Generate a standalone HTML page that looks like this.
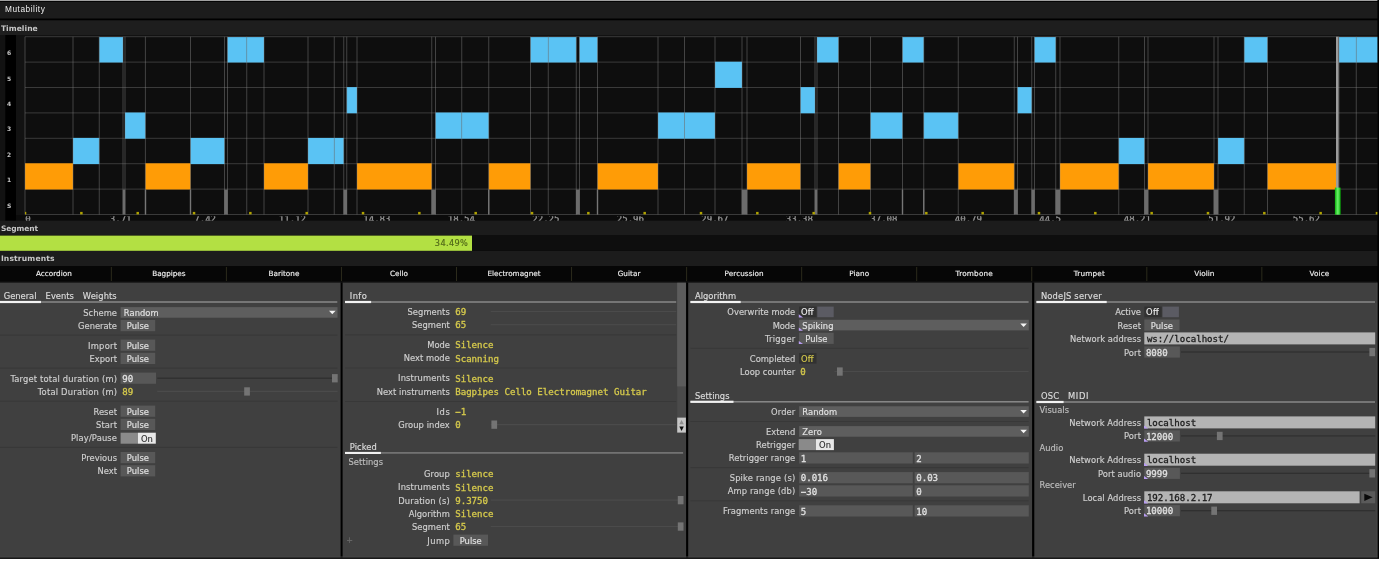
<!DOCTYPE html>
<html lang="en">
<head>
<meta charset="utf-8">
<title>Mutability</title>
<style>
html,body{margin:0;padding:0;background:#fff;width:1384px;height:562px;overflow:hidden}
svg text{white-space:pre}
</style>
</head>
<body>
<svg width="1384" height="562" viewBox="0 0 1384 562" style="position:absolute;left:0;top:0;display:block;filter:blur(0.4px)">
<rect x="0.00" y="0.00" width="1384.00" height="562.00" fill="#ffffff" />
<rect x="0.00" y="0.00" width="1379.00" height="558.90" fill="#000000" />
<rect x="0.00" y="0.00" width="1377.40" height="0.90" fill="#b4b4b4" />
<rect x="0.00" y="1.80" width="1377.40" height="16.70" fill="#1c1c1c" />
<text x="5.00" y="12.30" fill="#ececec" font-size="8.3" font-family="'Liberation Sans', sans-serif" text-anchor="start" font-weight="normal" textLength="39.8" lengthAdjust="spacing">Mutability</text>
<rect x="0.00" y="20.30" width="1377.40" height="14.70" fill="#1e1e1e" />
<text x="0.90" y="30.60" fill="#c8c8c8" font-size="7.6" font-family="'DejaVu Sans', 'Liberation Sans', sans-serif" text-anchor="start" font-weight="bold"  textLength="36.83" lengthAdjust="spacing">Timeline</text>
<rect x="0.00" y="35.00" width="1377.40" height="186.00" fill="#121212" />
<rect x="5.30" y="35.00" width="10.70" height="186.00" fill="#000000" />
<rect x="25.00" y="36.70" width="1352.40" height="177.80" fill="#0e0e0e" />
<rect x="16.00" y="215.00" width="1361.40" height="5.70" fill="#0b0b0b" />
<rect x="25.00" y="36.20" width="1352.40" height="1.00" fill="#3a3a3a" />
<rect x="25.00" y="61.60" width="1352.40" height="1.00" fill="#3a3a3a" />
<rect x="25.00" y="87.00" width="1352.40" height="1.00" fill="#3a3a3a" />
<rect x="25.00" y="112.40" width="1352.40" height="1.00" fill="#3a3a3a" />
<rect x="25.00" y="137.80" width="1352.40" height="1.00" fill="#3a3a3a" />
<rect x="25.00" y="163.20" width="1352.40" height="1.00" fill="#3a3a3a" />
<rect x="25.00" y="188.60" width="1352.40" height="1.00" fill="#3a3a3a" />
<rect x="25.00" y="214.00" width="1352.40" height="1.00" fill="#3a3a3a" />
<rect x="25.00" y="163.30" width="48.00" height="26.20" fill="#ff9c06" />
<rect x="73.00" y="137.90" width="26.25" height="26.20" fill="#5ac3f4" />
<rect x="99.25" y="37.10" width="23.75" height="25.40" fill="#5ac3f4" />
<rect x="125.00" y="112.50" width="20.40" height="26.20" fill="#5ac3f4" />
<rect x="145.40" y="163.30" width="45.10" height="26.20" fill="#ff9c06" />
<rect x="190.50" y="137.90" width="34.00" height="26.20" fill="#5ac3f4" />
<rect x="227.50" y="37.10" width="19.25" height="25.40" fill="#5ac3f4" />
<rect x="246.75" y="37.10" width="17.25" height="25.40" fill="#5ac3f4" />
<rect x="264.00" y="163.30" width="44.00" height="26.20" fill="#ff9c06" />
<rect x="308.00" y="137.90" width="26.25" height="26.20" fill="#5ac3f4" />
<rect x="334.25" y="137.90" width="9.50" height="26.20" fill="#5ac3f4" />
<rect x="346.75" y="87.10" width="10.25" height="26.20" fill="#5ac3f4" />
<rect x="357.00" y="163.30" width="74.75" height="26.20" fill="#ff9c06" />
<rect x="435.50" y="112.50" width="26.25" height="26.20" fill="#5ac3f4" />
<rect x="461.75" y="112.50" width="27.00" height="26.20" fill="#5ac3f4" />
<rect x="488.75" y="163.30" width="41.75" height="26.20" fill="#ff9c06" />
<rect x="530.50" y="37.10" width="17.75" height="25.40" fill="#5ac3f4" />
<rect x="548.25" y="37.10" width="28.00" height="25.40" fill="#5ac3f4" />
<rect x="579.50" y="37.10" width="18.00" height="25.40" fill="#5ac3f4" />
<rect x="597.50" y="163.30" width="60.50" height="26.20" fill="#ff9c06" />
<rect x="658.00" y="112.50" width="26.50" height="26.20" fill="#5ac3f4" />
<rect x="684.50" y="112.50" width="30.50" height="26.20" fill="#5ac3f4" />
<rect x="715.00" y="61.70" width="27.00" height="26.20" fill="#5ac3f4" />
<rect x="747.00" y="163.30" width="53.50" height="26.20" fill="#ff9c06" />
<rect x="800.50" y="87.10" width="14.50" height="26.20" fill="#5ac3f4" />
<rect x="817.00" y="37.10" width="21.50" height="25.40" fill="#5ac3f4" />
<rect x="838.50" y="163.30" width="32.00" height="26.20" fill="#ff9c06" />
<rect x="870.50" y="112.50" width="32.00" height="26.20" fill="#5ac3f4" />
<rect x="902.50" y="37.10" width="21.25" height="25.40" fill="#5ac3f4" />
<rect x="923.75" y="112.50" width="34.50" height="26.20" fill="#5ac3f4" />
<rect x="958.25" y="163.30" width="56.00" height="26.20" fill="#ff9c06" />
<rect x="1017.50" y="87.10" width="14.25" height="26.20" fill="#5ac3f4" />
<rect x="1034.50" y="37.10" width="21.25" height="25.40" fill="#5ac3f4" />
<rect x="1060.00" y="163.30" width="58.75" height="26.20" fill="#ff9c06" />
<rect x="1118.75" y="137.90" width="25.75" height="26.20" fill="#5ac3f4" />
<rect x="1148.00" y="163.30" width="66.00" height="26.20" fill="#ff9c06" />
<rect x="1218.00" y="137.90" width="26.25" height="26.20" fill="#5ac3f4" />
<rect x="1244.25" y="37.10" width="23.25" height="25.40" fill="#5ac3f4" />
<rect x="1267.50" y="163.30" width="68.70" height="26.20" fill="#ff9c06" />
<rect x="1339.00" y="37.10" width="17.25" height="25.40" fill="#5ac3f4" />
<rect x="1356.25" y="37.10" width="21.15" height="25.40" fill="#5ac3f4" />
<rect x="24.50" y="36.70" width="1.00" height="177.80" fill="#8c8c8c" opacity="0.42"/>
<rect x="72.50" y="36.70" width="1.00" height="177.80" fill="#8c8c8c" opacity="0.42"/>
<rect x="98.75" y="36.70" width="1.00" height="177.80" fill="#8c8c8c" opacity="0.42"/>
<rect x="122.50" y="36.70" width="1.00" height="177.80" fill="#8c8c8c" opacity="0.42"/>
<rect x="124.50" y="36.70" width="1.00" height="177.80" fill="#8c8c8c" opacity="0.42"/>
<rect x="144.90" y="36.70" width="1.00" height="177.80" fill="#8c8c8c" opacity="0.42"/>
<rect x="190.00" y="36.70" width="1.00" height="177.80" fill="#8c8c8c" opacity="0.42"/>
<rect x="224.00" y="36.70" width="1.00" height="177.80" fill="#8c8c8c" opacity="0.42"/>
<rect x="227.00" y="36.70" width="1.00" height="177.80" fill="#8c8c8c" opacity="0.42"/>
<rect x="246.25" y="36.70" width="1.00" height="177.80" fill="#8c8c8c" opacity="0.42"/>
<rect x="263.50" y="36.70" width="1.00" height="177.80" fill="#8c8c8c" opacity="0.42"/>
<rect x="307.50" y="36.70" width="1.00" height="177.80" fill="#8c8c8c" opacity="0.42"/>
<rect x="333.75" y="36.70" width="1.00" height="177.80" fill="#8c8c8c" opacity="0.42"/>
<rect x="343.25" y="36.70" width="1.00" height="177.80" fill="#8c8c8c" opacity="0.42"/>
<rect x="346.25" y="36.70" width="1.00" height="177.80" fill="#8c8c8c" opacity="0.42"/>
<rect x="356.50" y="36.70" width="1.00" height="177.80" fill="#8c8c8c" opacity="0.42"/>
<rect x="431.25" y="36.70" width="1.00" height="177.80" fill="#8c8c8c" opacity="0.42"/>
<rect x="435.00" y="36.70" width="1.00" height="177.80" fill="#8c8c8c" opacity="0.42"/>
<rect x="461.25" y="36.70" width="1.00" height="177.80" fill="#8c8c8c" opacity="0.42"/>
<rect x="488.25" y="36.70" width="1.00" height="177.80" fill="#8c8c8c" opacity="0.42"/>
<rect x="530.00" y="36.70" width="1.00" height="177.80" fill="#8c8c8c" opacity="0.42"/>
<rect x="547.75" y="36.70" width="1.00" height="177.80" fill="#8c8c8c" opacity="0.42"/>
<rect x="575.75" y="36.70" width="1.00" height="177.80" fill="#8c8c8c" opacity="0.42"/>
<rect x="579.00" y="36.70" width="1.00" height="177.80" fill="#8c8c8c" opacity="0.42"/>
<rect x="597.00" y="36.70" width="1.00" height="177.80" fill="#8c8c8c" opacity="0.42"/>
<rect x="657.50" y="36.70" width="1.00" height="177.80" fill="#8c8c8c" opacity="0.42"/>
<rect x="684.00" y="36.70" width="1.00" height="177.80" fill="#8c8c8c" opacity="0.42"/>
<rect x="714.50" y="36.70" width="1.00" height="177.80" fill="#8c8c8c" opacity="0.42"/>
<rect x="741.50" y="36.70" width="1.00" height="177.80" fill="#8c8c8c" opacity="0.42"/>
<rect x="746.50" y="36.70" width="1.00" height="177.80" fill="#8c8c8c" opacity="0.42"/>
<rect x="800.00" y="36.70" width="1.00" height="177.80" fill="#8c8c8c" opacity="0.42"/>
<rect x="814.50" y="36.70" width="1.00" height="177.80" fill="#8c8c8c" opacity="0.42"/>
<rect x="816.50" y="36.70" width="1.00" height="177.80" fill="#8c8c8c" opacity="0.42"/>
<rect x="838.00" y="36.70" width="1.00" height="177.80" fill="#8c8c8c" opacity="0.42"/>
<rect x="870.00" y="36.70" width="1.00" height="177.80" fill="#8c8c8c" opacity="0.42"/>
<rect x="902.00" y="36.70" width="1.00" height="177.80" fill="#8c8c8c" opacity="0.42"/>
<rect x="923.25" y="36.70" width="1.00" height="177.80" fill="#8c8c8c" opacity="0.42"/>
<rect x="957.75" y="36.70" width="1.00" height="177.80" fill="#8c8c8c" opacity="0.42"/>
<rect x="1013.75" y="36.70" width="1.00" height="177.80" fill="#8c8c8c" opacity="0.42"/>
<rect x="1017.00" y="36.70" width="1.00" height="177.80" fill="#8c8c8c" opacity="0.42"/>
<rect x="1031.25" y="36.70" width="1.00" height="177.80" fill="#8c8c8c" opacity="0.42"/>
<rect x="1034.00" y="36.70" width="1.00" height="177.80" fill="#8c8c8c" opacity="0.42"/>
<rect x="1055.25" y="36.70" width="1.00" height="177.80" fill="#8c8c8c" opacity="0.42"/>
<rect x="1059.50" y="36.70" width="1.00" height="177.80" fill="#8c8c8c" opacity="0.42"/>
<rect x="1118.25" y="36.70" width="1.00" height="177.80" fill="#8c8c8c" opacity="0.42"/>
<rect x="1144.00" y="36.70" width="1.00" height="177.80" fill="#8c8c8c" opacity="0.42"/>
<rect x="1147.50" y="36.70" width="1.00" height="177.80" fill="#8c8c8c" opacity="0.42"/>
<rect x="1213.50" y="36.70" width="1.00" height="177.80" fill="#8c8c8c" opacity="0.42"/>
<rect x="1217.50" y="36.70" width="1.00" height="177.80" fill="#8c8c8c" opacity="0.42"/>
<rect x="1243.75" y="36.70" width="1.00" height="177.80" fill="#8c8c8c" opacity="0.42"/>
<rect x="1267.00" y="36.70" width="1.00" height="177.80" fill="#8c8c8c" opacity="0.42"/>
<rect x="1338.50" y="36.70" width="1.00" height="177.80" fill="#8c8c8c" opacity="0.42"/>
<rect x="1355.75" y="36.70" width="1.00" height="177.80" fill="#8c8c8c" opacity="0.42"/>
<rect x="122.70" y="189.60" width="2.60" height="24.90" fill="#6c6c6c" />
<rect x="224.20" y="189.60" width="3.60" height="24.90" fill="#6c6c6c" />
<rect x="343.45" y="189.60" width="3.60" height="24.90" fill="#6c6c6c" />
<rect x="431.45" y="189.60" width="4.35" height="24.90" fill="#6c6c6c" />
<rect x="575.95" y="189.60" width="3.85" height="24.90" fill="#6c6c6c" />
<rect x="741.70" y="189.60" width="5.60" height="24.90" fill="#6c6c6c" />
<rect x="814.70" y="189.60" width="2.60" height="24.90" fill="#6c6c6c" />
<rect x="1013.95" y="189.60" width="3.85" height="24.90" fill="#6c6c6c" />
<rect x="1031.45" y="189.60" width="3.35" height="24.90" fill="#6c6c6c" />
<rect x="1055.45" y="189.60" width="4.85" height="24.90" fill="#6c6c6c" />
<rect x="1144.20" y="189.60" width="4.10" height="24.90" fill="#6c6c6c" />
<rect x="1213.70" y="189.60" width="4.60" height="24.90" fill="#6c6c6c" />
<rect x="144.80" y="189.60" width="1.40" height="24.90" fill="#767676" />
<rect x="189.80" y="189.60" width="1.40" height="24.90" fill="#767676" />
<rect x="488.05" y="189.60" width="1.40" height="24.90" fill="#767676" />
<rect x="596.80" y="189.60" width="1.40" height="24.90" fill="#767676" />
<rect x="901.80" y="189.60" width="1.40" height="24.90" fill="#767676" />
<rect x="923.05" y="189.60" width="1.40" height="24.90" fill="#767676" />
<rect x="1336.00" y="36.70" width="2.60" height="152.90" fill="#9c9c9c" />
<defs><linearGradient id="gg" x1="0" x2="1" y1="0" y2="0"><stop offset="0" stop-color="#08b408"/><stop offset="0.5" stop-color="#6cf06c"/><stop offset="1" stop-color="#08b408"/></linearGradient></defs>
<rect x="1334.90" y="187.60" width="5.70" height="27.10" fill="url(#gg)" />
<rect x="25.00" y="211.90" width="1.30" height="2.50" fill="#b0a300" />
<rect x="80.13" y="211.90" width="2.50" height="2.50" fill="#b0a300" />
<rect x="136.46" y="211.90" width="2.50" height="2.50" fill="#b0a300" />
<rect x="192.79" y="211.90" width="2.50" height="2.50" fill="#b0a300" />
<rect x="249.12" y="211.90" width="2.50" height="2.50" fill="#b0a300" />
<rect x="305.45" y="211.90" width="2.50" height="2.50" fill="#b0a300" />
<rect x="361.78" y="211.90" width="2.50" height="2.50" fill="#b0a300" />
<rect x="418.11" y="211.90" width="2.50" height="2.50" fill="#b0a300" />
<rect x="474.44" y="211.90" width="2.50" height="2.50" fill="#b0a300" />
<rect x="530.77" y="211.90" width="2.50" height="2.50" fill="#b0a300" />
<rect x="587.10" y="211.90" width="2.50" height="2.50" fill="#b0a300" />
<rect x="643.43" y="211.90" width="2.50" height="2.50" fill="#b0a300" />
<rect x="699.76" y="211.90" width="2.50" height="2.50" fill="#b0a300" />
<rect x="756.09" y="211.90" width="2.50" height="2.50" fill="#b0a300" />
<rect x="812.42" y="211.90" width="2.50" height="2.50" fill="#b0a300" />
<rect x="868.75" y="211.90" width="2.50" height="2.50" fill="#b0a300" />
<rect x="925.08" y="211.90" width="2.50" height="2.50" fill="#b0a300" />
<rect x="981.41" y="211.90" width="2.50" height="2.50" fill="#b0a300" />
<rect x="1037.74" y="211.90" width="2.50" height="2.50" fill="#b0a300" />
<rect x="1094.07" y="211.90" width="2.50" height="2.50" fill="#b0a300" />
<rect x="1150.40" y="211.90" width="2.50" height="2.50" fill="#b0a300" />
<rect x="1206.73" y="211.90" width="2.50" height="2.50" fill="#b0a300" />
<rect x="1263.06" y="211.90" width="2.50" height="2.50" fill="#b0a300" />
<rect x="1319.39" y="211.90" width="2.50" height="2.50" fill="#b0a300" />
<rect x="1375.72" y="211.90" width="1.68" height="2.50" fill="#b0a300" />
<text x="7.00" y="55.20" fill="#c4c4c4" font-size="6.0" font-family="'DejaVu Sans', 'Liberation Sans', sans-serif" text-anchor="start" font-weight="bold" >6</text>
<text x="7.00" y="80.60" fill="#c4c4c4" font-size="6.0" font-family="'DejaVu Sans', 'Liberation Sans', sans-serif" text-anchor="start" font-weight="bold" >5</text>
<text x="7.00" y="106.00" fill="#c4c4c4" font-size="6.0" font-family="'DejaVu Sans', 'Liberation Sans', sans-serif" text-anchor="start" font-weight="bold" >4</text>
<text x="7.00" y="131.40" fill="#c4c4c4" font-size="6.0" font-family="'DejaVu Sans', 'Liberation Sans', sans-serif" text-anchor="start" font-weight="bold" >3</text>
<text x="7.00" y="156.80" fill="#c4c4c4" font-size="6.0" font-family="'DejaVu Sans', 'Liberation Sans', sans-serif" text-anchor="start" font-weight="bold" >2</text>
<text x="7.00" y="182.20" fill="#c4c4c4" font-size="6.0" font-family="'DejaVu Sans', 'Liberation Sans', sans-serif" text-anchor="start" font-weight="bold" >1</text>
<text x="7.00" y="207.60" fill="#c4c4c4" font-size="6.0" font-family="'DejaVu Sans', 'Liberation Sans', sans-serif" text-anchor="start" font-weight="bold" >S</text>
<clipPath id="axc"><rect x="0" y="216.3" width="1378" height="10"/></clipPath><g clip-path="url(#axc)">
<text x="25.20" y="222.00" fill="#969696" font-size="9.1" font-family="'DejaVu Sans Mono', 'Liberation Mono', monospace" text-anchor="start" font-weight="normal"  stroke="#969696" stroke-width="0.3">0</text>
<text x="109.70" y="222.00" fill="#969696" font-size="9.1" font-family="'DejaVu Sans Mono', 'Liberation Mono', monospace" text-anchor="start" font-weight="normal"  stroke="#969696" stroke-width="0.3">3.71</text>
<text x="194.20" y="222.00" fill="#969696" font-size="9.1" font-family="'DejaVu Sans Mono', 'Liberation Mono', monospace" text-anchor="start" font-weight="normal"  stroke="#969696" stroke-width="0.3">7.42</text>
<text x="278.70" y="222.00" fill="#969696" font-size="9.1" font-family="'DejaVu Sans Mono', 'Liberation Mono', monospace" text-anchor="start" font-weight="normal"  stroke="#969696" stroke-width="0.3">11.12</text>
<text x="363.20" y="222.00" fill="#969696" font-size="9.1" font-family="'DejaVu Sans Mono', 'Liberation Mono', monospace" text-anchor="start" font-weight="normal"  stroke="#969696" stroke-width="0.3">14.83</text>
<text x="447.70" y="222.00" fill="#969696" font-size="9.1" font-family="'DejaVu Sans Mono', 'Liberation Mono', monospace" text-anchor="start" font-weight="normal"  stroke="#969696" stroke-width="0.3">18.54</text>
<text x="532.20" y="222.00" fill="#969696" font-size="9.1" font-family="'DejaVu Sans Mono', 'Liberation Mono', monospace" text-anchor="start" font-weight="normal"  stroke="#969696" stroke-width="0.3">22.25</text>
<text x="616.70" y="222.00" fill="#969696" font-size="9.1" font-family="'DejaVu Sans Mono', 'Liberation Mono', monospace" text-anchor="start" font-weight="normal"  stroke="#969696" stroke-width="0.3">25.96</text>
<text x="701.20" y="222.00" fill="#969696" font-size="9.1" font-family="'DejaVu Sans Mono', 'Liberation Mono', monospace" text-anchor="start" font-weight="normal"  stroke="#969696" stroke-width="0.3">29.67</text>
<text x="785.70" y="222.00" fill="#969696" font-size="9.1" font-family="'DejaVu Sans Mono', 'Liberation Mono', monospace" text-anchor="start" font-weight="normal"  stroke="#969696" stroke-width="0.3">33.38</text>
<text x="870.20" y="222.00" fill="#969696" font-size="9.1" font-family="'DejaVu Sans Mono', 'Liberation Mono', monospace" text-anchor="start" font-weight="normal"  stroke="#969696" stroke-width="0.3">37.08</text>
<text x="954.70" y="222.00" fill="#969696" font-size="9.1" font-family="'DejaVu Sans Mono', 'Liberation Mono', monospace" text-anchor="start" font-weight="normal"  stroke="#969696" stroke-width="0.3">40.79</text>
<text x="1039.20" y="222.00" fill="#969696" font-size="9.1" font-family="'DejaVu Sans Mono', 'Liberation Mono', monospace" text-anchor="start" font-weight="normal"  stroke="#969696" stroke-width="0.3">44.5</text>
<text x="1123.70" y="222.00" fill="#969696" font-size="9.1" font-family="'DejaVu Sans Mono', 'Liberation Mono', monospace" text-anchor="start" font-weight="normal"  stroke="#969696" stroke-width="0.3">48.21</text>
<text x="1208.20" y="222.00" fill="#969696" font-size="9.1" font-family="'DejaVu Sans Mono', 'Liberation Mono', monospace" text-anchor="start" font-weight="normal"  stroke="#969696" stroke-width="0.3">51.92</text>
<text x="1292.70" y="222.00" fill="#969696" font-size="9.1" font-family="'DejaVu Sans Mono', 'Liberation Mono', monospace" text-anchor="start" font-weight="normal"  stroke="#969696" stroke-width="0.3">55.62</text>
</g>
<rect x="0.00" y="220.70" width="1377.40" height="14.90" fill="#1c1c1c" />
<text x="0.90" y="231.00" fill="#c8c8c8" font-size="7.5" font-family="'DejaVu Sans', 'Liberation Sans', sans-serif" text-anchor="start" font-weight="bold"  textLength="37.20" lengthAdjust="spacing">Segment</text>
<rect x="0.00" y="235.60" width="1377.40" height="15.30" fill="#0e0e0e" />
<rect x="0.00" y="235.60" width="472.00" height="15.30" fill="#b3e043" />
<text x="467.80" y="246.30" fill="#4f6618" font-size="8.2" font-family="'DejaVu Sans', 'Liberation Sans', sans-serif" text-anchor="end" font-weight="normal"  textLength="32.94" lengthAdjust="spacing" stroke="#4f6618" stroke-width="0.15">34.49%</text>
<rect x="0.00" y="250.90" width="1377.40" height="15.40" fill="#1c1c1c" />
<text x="0.90" y="261.40" fill="#c8c8c8" font-size="7.6" font-family="'DejaVu Sans', 'Liberation Sans', sans-serif" text-anchor="start" font-weight="bold"  textLength="53.64" lengthAdjust="spacing">Instruments</text>
<rect x="0.00" y="266.30" width="1377.40" height="15.10" fill="#060606" />
<text x="53.82" y="276.30" fill="#f0f0f0" font-size="7.26" font-family="'DejaVu Sans', 'Liberation Sans', sans-serif" text-anchor="middle" font-weight="normal"  textLength="35.85" lengthAdjust="spacing" stroke="#f0f0f0" stroke-width="0.15">Accordion</text>
<text x="168.88" y="276.30" fill="#f0f0f0" font-size="7.26" font-family="'DejaVu Sans', 'Liberation Sans', sans-serif" text-anchor="middle" font-weight="normal"  textLength="33.29" lengthAdjust="spacing" stroke="#f0f0f0" stroke-width="0.15">Bagpipes</text>
<rect x="110.85" y="267.00" width="1.00" height="14.00" fill="#2c2b1c" />
<text x="283.93" y="276.30" fill="#f0f0f0" font-size="7.26" font-family="'DejaVu Sans', 'Liberation Sans', sans-serif" text-anchor="middle" font-weight="normal"  textLength="30.88" lengthAdjust="spacing" stroke="#f0f0f0" stroke-width="0.15">Baritone</text>
<rect x="225.90" y="267.00" width="1.00" height="14.00" fill="#2c2b1c" />
<text x="398.97" y="276.30" fill="#f0f0f0" font-size="7.26" font-family="'DejaVu Sans', 'Liberation Sans', sans-serif" text-anchor="middle" font-weight="normal"  textLength="17.93" lengthAdjust="spacing" stroke="#f0f0f0" stroke-width="0.15">Cello</text>
<rect x="340.95" y="267.00" width="1.00" height="14.00" fill="#2c2b1c" />
<text x="514.02" y="276.30" fill="#f0f0f0" font-size="7.26" font-family="'DejaVu Sans', 'Liberation Sans', sans-serif" text-anchor="middle" font-weight="normal"  textLength="53.23" lengthAdjust="spacing" stroke="#f0f0f0" stroke-width="0.15">Electromagnet</text>
<rect x="456.00" y="267.00" width="1.00" height="14.00" fill="#2c2b1c" />
<text x="629.07" y="276.30" fill="#f0f0f0" font-size="7.26" font-family="'DejaVu Sans', 'Liberation Sans', sans-serif" text-anchor="middle" font-weight="normal"  textLength="22.72" lengthAdjust="spacing" stroke="#f0f0f0" stroke-width="0.15">Guitar</text>
<rect x="571.05" y="267.00" width="1.00" height="14.00" fill="#2c2b1c" />
<text x="744.12" y="276.30" fill="#f0f0f0" font-size="7.26" font-family="'DejaVu Sans', 'Liberation Sans', sans-serif" text-anchor="middle" font-weight="normal"  textLength="39.06" lengthAdjust="spacing" stroke="#f0f0f0" stroke-width="0.15">Percussion</text>
<rect x="686.10" y="267.00" width="1.00" height="14.00" fill="#2c2b1c" />
<text x="859.17" y="276.30" fill="#f0f0f0" font-size="7.26" font-family="'DejaVu Sans', 'Liberation Sans', sans-serif" text-anchor="middle" font-weight="normal"  textLength="19.90" lengthAdjust="spacing" stroke="#f0f0f0" stroke-width="0.15">Piano</text>
<rect x="801.15" y="267.00" width="1.00" height="14.00" fill="#2c2b1c" />
<text x="974.22" y="276.30" fill="#f0f0f0" font-size="7.26" font-family="'DejaVu Sans', 'Liberation Sans', sans-serif" text-anchor="middle" font-weight="normal"  textLength="37.20" lengthAdjust="spacing" stroke="#f0f0f0" stroke-width="0.15">Trombone</text>
<rect x="916.20" y="267.00" width="1.00" height="14.00" fill="#2c2b1c" />
<text x="1089.28" y="276.30" fill="#f0f0f0" font-size="7.26" font-family="'DejaVu Sans', 'Liberation Sans', sans-serif" text-anchor="middle" font-weight="normal"  textLength="31.20" lengthAdjust="spacing" stroke="#f0f0f0" stroke-width="0.15">Trumpet</text>
<rect x="1031.25" y="267.00" width="1.00" height="14.00" fill="#2c2b1c" />
<text x="1204.33" y="276.30" fill="#f0f0f0" font-size="7.26" font-family="'DejaVu Sans', 'Liberation Sans', sans-serif" text-anchor="middle" font-weight="normal"  textLength="20.10" lengthAdjust="spacing" stroke="#f0f0f0" stroke-width="0.15">Violin</text>
<rect x="1146.30" y="267.00" width="1.00" height="14.00" fill="#2c2b1c" />
<text x="1319.38" y="276.30" fill="#f0f0f0" font-size="7.26" font-family="'DejaVu Sans', 'Liberation Sans', sans-serif" text-anchor="middle" font-weight="normal"  textLength="19.63" lengthAdjust="spacing" stroke="#f0f0f0" stroke-width="0.15">Voice</text>
<rect x="1261.35" y="267.00" width="1.00" height="14.00" fill="#2c2b1c" />
<rect x="0.00" y="281.40" width="1377.40" height="1.20" fill="#161616" />
<rect x="0.00" y="282.60" width="340.60" height="274.80" fill="#404040" />
<rect x="342.60" y="282.60" width="343.50" height="274.80" fill="#404040" />
<rect x="688.20" y="282.60" width="343.90" height="274.80" fill="#404040" />
<rect x="1034.30" y="282.60" width="343.10" height="274.80" fill="#404040" />
<rect x="0.00" y="556.60" width="1377.40" height="0.80" fill="#4a4a4a" />
<rect x="1376.60" y="282.60" width="0.80" height="274.80" fill="#4a4a4a" />
<rect x="0.00" y="301.30" width="337.30" height="1.40" fill="#8e8e8e" />
<rect x="0.00" y="300.90" width="41.00" height="2.20" fill="#f2f2f2" />
<text x="3.70" y="298.70" fill="#dcdcdc" font-size="8.35" font-family="'DejaVu Sans', 'Liberation Sans', sans-serif" text-anchor="start" font-weight="normal"  textLength="32.85" lengthAdjust="spacing" stroke="#dcdcdc" stroke-width="0.15">General</text>
<text x="45.60" y="298.70" fill="#dcdcdc" font-size="8.35" font-family="'DejaVu Sans', 'Liberation Sans', sans-serif" text-anchor="start" font-weight="normal"  textLength="28.36" lengthAdjust="spacing" stroke="#dcdcdc" stroke-width="0.15">Events</text>
<text x="82.80" y="298.70" fill="#dcdcdc" font-size="8.35" font-family="'DejaVu Sans', 'Liberation Sans', sans-serif" text-anchor="start" font-weight="normal"  textLength="33.93" lengthAdjust="spacing" stroke="#dcdcdc" stroke-width="0.15">Weights</text>
<text x="117.00" y="315.90" fill="#d0d0d0" font-size="8.35" font-family="'DejaVu Sans', 'Liberation Sans', sans-serif" text-anchor="end" font-weight="normal"  textLength="33.71" lengthAdjust="spacing" stroke="#d0d0d0" stroke-width="0.15">Scheme</text>
<rect x="120.60" y="307.10" width="216.90" height="10.60" fill="#5e5e5e" />
<text x="123.80" y="315.90" fill="#e2e2e2" font-size="8.35" font-family="'DejaVu Sans', 'Liberation Sans', sans-serif" text-anchor="start" font-weight="normal"  textLength="34.79" lengthAdjust="spacing" stroke="#e2e2e2" stroke-width="0.15">Random</text>
<path d="M329.00 310.70 L335.60 310.70 L332.30 314.30 Z" fill="#f4f4f4"/>
<text x="117.00" y="329.10" fill="#d0d0d0" font-size="8.35" font-family="'DejaVu Sans', 'Liberation Sans', sans-serif" text-anchor="end" font-weight="normal"  textLength="38.88" lengthAdjust="spacing" stroke="#d0d0d0" stroke-width="0.15">Generate</text>
<rect x="120.60" y="320.00" width="34.60" height="11.20" fill="#585858" />
<text x="137.90" y="329.10" fill="#e2e2e2" font-size="8.35" font-family="'DejaVu Sans', 'Liberation Sans', sans-serif" text-anchor="middle" font-weight="normal"  textLength="22.12" lengthAdjust="spacing" stroke="#e2e2e2" stroke-width="0.15">Pulse</text>
<rect x="0.00" y="334.60" width="337.50" height="1.00" fill="#383838" />
<text x="117.00" y="348.70" fill="#d0d0d0" font-size="8.35" font-family="'DejaVu Sans', 'Liberation Sans', sans-serif" text-anchor="end" font-weight="normal"  textLength="29.01" lengthAdjust="spacing" stroke="#d0d0d0" stroke-width="0.15">Import</text>
<rect x="120.60" y="339.60" width="34.60" height="11.20" fill="#585858" />
<text x="137.90" y="348.70" fill="#e2e2e2" font-size="8.35" font-family="'DejaVu Sans', 'Liberation Sans', sans-serif" text-anchor="middle" font-weight="normal"  textLength="22.12" lengthAdjust="spacing" stroke="#e2e2e2" stroke-width="0.15">Pulse</text>
<text x="117.00" y="361.90" fill="#d0d0d0" font-size="8.35" font-family="'DejaVu Sans', 'Liberation Sans', sans-serif" text-anchor="end" font-weight="normal"  textLength="27.58" lengthAdjust="spacing" stroke="#d0d0d0" stroke-width="0.15">Export</text>
<rect x="120.60" y="352.80" width="34.60" height="11.20" fill="#585858" />
<text x="137.90" y="361.90" fill="#e2e2e2" font-size="8.35" font-family="'DejaVu Sans', 'Liberation Sans', sans-serif" text-anchor="middle" font-weight="normal"  textLength="22.12" lengthAdjust="spacing" stroke="#e2e2e2" stroke-width="0.15">Pulse</text>
<rect x="0.00" y="367.60" width="337.50" height="1.00" fill="#383838" />
<text x="117.00" y="381.70" fill="#d0d0d0" font-size="8.35" font-family="'DejaVu Sans', 'Liberation Sans', sans-serif" text-anchor="end" font-weight="normal"  textLength="106.56" lengthAdjust="spacing" stroke="#d0d0d0" stroke-width="0.15">Target total duration (m)</text>
<rect x="120.60" y="372.60" width="35.40" height="11.20" fill="#585858" />
<text x="122.20" y="381.90" fill="#e0e0e0" font-size="9.1" font-family="'DejaVu Sans Mono', 'Liberation Mono', monospace" text-anchor="start" font-weight="normal"  stroke="#e0e0e0" stroke-width="0.3">90</text>
<rect x="157.20" y="377.60" width="180.40" height="1.20" fill="#2f2f2f" />
<rect x="332.00" y="374.10" width="5.70" height="8.30" fill="#747474" />
<text x="117.00" y="394.90" fill="#d0d0d0" font-size="8.35" font-family="'DejaVu Sans', 'Liberation Sans', sans-serif" text-anchor="end" font-weight="normal"  textLength="79.29" lengthAdjust="spacing" stroke="#d0d0d0" stroke-width="0.15">Total Duration (m)</text>
<text x="122.20" y="395.10" fill="#d6ca4c" font-size="9.1" font-family="'DejaVu Sans Mono', 'Liberation Mono', monospace" text-anchor="start" font-weight="normal"  stroke="#d6ca4c" stroke-width="0.3">89</text>
<rect x="157.20" y="390.80" width="180.40" height="1.20" fill="#4b4b4b" />
<rect x="244.20" y="387.30" width="5.70" height="8.30" fill="#747474" />
<rect x="0.00" y="400.70" width="337.50" height="1.00" fill="#383838" />
<text x="117.00" y="414.70" fill="#d0d0d0" font-size="8.35" font-family="'DejaVu Sans', 'Liberation Sans', sans-serif" text-anchor="end" font-weight="normal"  textLength="23.59" lengthAdjust="spacing" stroke="#d0d0d0" stroke-width="0.15">Reset</text>
<rect x="120.60" y="405.60" width="34.60" height="11.20" fill="#585858" />
<text x="137.90" y="414.70" fill="#e2e2e2" font-size="8.35" font-family="'DejaVu Sans', 'Liberation Sans', sans-serif" text-anchor="middle" font-weight="normal"  textLength="22.12" lengthAdjust="spacing" stroke="#e2e2e2" stroke-width="0.15">Pulse</text>
<text x="117.00" y="427.90" fill="#d0d0d0" font-size="8.35" font-family="'DejaVu Sans', 'Liberation Sans', sans-serif" text-anchor="end" font-weight="normal"  textLength="21.05" lengthAdjust="spacing" stroke="#d0d0d0" stroke-width="0.15">Start</text>
<rect x="120.60" y="418.80" width="34.60" height="11.20" fill="#585858" />
<text x="137.90" y="427.90" fill="#e2e2e2" font-size="8.35" font-family="'DejaVu Sans', 'Liberation Sans', sans-serif" text-anchor="middle" font-weight="normal"  textLength="22.12" lengthAdjust="spacing" stroke="#e2e2e2" stroke-width="0.15">Pulse</text>
<text x="117.00" y="441.10" fill="#d0d0d0" font-size="8.35" font-family="'DejaVu Sans', 'Liberation Sans', sans-serif" text-anchor="end" font-weight="normal"  textLength="46.12" lengthAdjust="spacing" stroke="#d0d0d0" stroke-width="0.15">Play/Pause</text>
<rect x="120.60" y="432.70" width="17.30" height="11.00" fill="#8a8a8a" />
<rect x="137.90" y="432.70" width="17.90" height="11.00" fill="#e8e8e8" />
<text x="146.90" y="441.70" fill="#303030" font-size="8.35" font-family="'DejaVu Sans', 'Liberation Sans', sans-serif" text-anchor="middle" font-weight="normal"  textLength="11.96" lengthAdjust="spacing" stroke="#303030" stroke-width="0.15">On</text>
<rect x="0.00" y="446.90" width="337.50" height="1.00" fill="#383838" />
<text x="117.00" y="461.10" fill="#d0d0d0" font-size="8.35" font-family="'DejaVu Sans', 'Liberation Sans', sans-serif" text-anchor="end" font-weight="normal"  textLength="35.81" lengthAdjust="spacing" stroke="#d0d0d0" stroke-width="0.15">Previous</text>
<rect x="120.60" y="452.00" width="34.60" height="11.20" fill="#585858" />
<text x="137.90" y="461.10" fill="#e2e2e2" font-size="8.35" font-family="'DejaVu Sans', 'Liberation Sans', sans-serif" text-anchor="middle" font-weight="normal"  textLength="22.12" lengthAdjust="spacing" stroke="#e2e2e2" stroke-width="0.15">Pulse</text>
<text x="117.00" y="474.30" fill="#d0d0d0" font-size="8.35" font-family="'DejaVu Sans', 'Liberation Sans', sans-serif" text-anchor="end" font-weight="normal"  textLength="19.62" lengthAdjust="spacing" stroke="#d0d0d0" stroke-width="0.15">Next</text>
<rect x="120.60" y="465.20" width="34.60" height="11.20" fill="#585858" />
<text x="137.90" y="474.30" fill="#e2e2e2" font-size="8.35" font-family="'DejaVu Sans', 'Liberation Sans', sans-serif" text-anchor="middle" font-weight="normal"  textLength="22.12" lengthAdjust="spacing" stroke="#e2e2e2" stroke-width="0.15">Pulse</text>
<rect x="345.00" y="301.30" width="331.20" height="1.40" fill="#8e8e8e" />
<rect x="345.00" y="300.90" width="26.10" height="2.20" fill="#f2f2f2" />
<text x="349.80" y="298.70" fill="#dcdcdc" font-size="8.35" font-family="'DejaVu Sans', 'Liberation Sans', sans-serif" text-anchor="start" font-weight="normal"  textLength="16.95" lengthAdjust="spacing" stroke="#dcdcdc" stroke-width="0.15">Info</text>
<text x="449.80" y="315.00" fill="#d0d0d0" font-size="8.35" font-family="'DejaVu Sans', 'Liberation Sans', sans-serif" text-anchor="end" font-weight="normal"  textLength="42.27" lengthAdjust="spacing" stroke="#d0d0d0" stroke-width="0.15">Segments</text>
<text x="455.20" y="315.20" fill="#d6ca4c" font-size="9.1" font-family="'DejaVu Sans Mono', 'Liberation Mono', monospace" text-anchor="start" font-weight="normal"  stroke="#d6ca4c" stroke-width="0.3">69</text>
<rect x="490.70" y="310.90" width="185.50" height="1.20" fill="#4b4b4b" />
<text x="449.80" y="328.20" fill="#d0d0d0" font-size="8.35" font-family="'DejaVu Sans', 'Liberation Sans', sans-serif" text-anchor="end" font-weight="normal"  textLength="37.88" lengthAdjust="spacing" stroke="#d0d0d0" stroke-width="0.15">Segment</text>
<text x="455.20" y="328.40" fill="#d6ca4c" font-size="9.1" font-family="'DejaVu Sans Mono', 'Liberation Mono', monospace" text-anchor="start" font-weight="normal"  stroke="#d6ca4c" stroke-width="0.3">65</text>
<rect x="490.70" y="324.10" width="185.50" height="1.20" fill="#4b4b4b" />
<rect x="345.00" y="334.40" width="331.20" height="1.00" fill="#383838" />
<text x="449.80" y="348.10" fill="#d0d0d0" font-size="8.35" font-family="'DejaVu Sans', 'Liberation Sans', sans-serif" text-anchor="end" font-weight="normal"  textLength="22.47" lengthAdjust="spacing" stroke="#d0d0d0" stroke-width="0.15">Mode</text>
<text x="455.20" y="348.30" fill="#d6ca4c" font-size="9.1" font-family="'DejaVu Sans Mono', 'Liberation Mono', monospace" text-anchor="start" font-weight="normal"  stroke="#d6ca4c" stroke-width="0.3">Silence</text>
<text x="449.80" y="361.30" fill="#d0d0d0" font-size="8.35" font-family="'DejaVu Sans', 'Liberation Sans', sans-serif" text-anchor="end" font-weight="normal"  textLength="46.15" lengthAdjust="spacing" stroke="#d0d0d0" stroke-width="0.15">Next mode</text>
<text x="455.20" y="361.50" fill="#d6ca4c" font-size="9.1" font-family="'DejaVu Sans Mono', 'Liberation Mono', monospace" text-anchor="start" font-weight="normal"  stroke="#d6ca4c" stroke-width="0.3">Scanning</text>
<rect x="345.00" y="367.50" width="331.20" height="1.00" fill="#383838" />
<text x="449.80" y="381.30" fill="#d0d0d0" font-size="8.35" font-family="'DejaVu Sans', 'Liberation Sans', sans-serif" text-anchor="end" font-weight="normal"  textLength="51.75" lengthAdjust="spacing" stroke="#d0d0d0" stroke-width="0.15">Instruments</text>
<text x="455.20" y="381.50" fill="#d6ca4c" font-size="9.1" font-family="'DejaVu Sans Mono', 'Liberation Mono', monospace" text-anchor="start" font-weight="normal"  stroke="#d6ca4c" stroke-width="0.3">Silence</text>
<text x="449.80" y="394.50" fill="#d0d0d0" font-size="8.35" font-family="'DejaVu Sans', 'Liberation Sans', sans-serif" text-anchor="end" font-weight="normal"  textLength="73.09" lengthAdjust="spacing" stroke="#d0d0d0" stroke-width="0.15">Next instruments</text>
<text x="455.20" y="394.70" fill="#d6ca4c" font-size="9.1" font-family="'DejaVu Sans Mono', 'Liberation Mono', monospace" text-anchor="start" font-weight="normal"  stroke="#d6ca4c" stroke-width="0.3">Bagpipes Cello Electromagnet Guitar</text>
<rect x="345.00" y="401.00" width="331.20" height="1.00" fill="#383838" />
<text x="449.80" y="414.90" fill="#d0d0d0" font-size="8.35" font-family="'DejaVu Sans', 'Liberation Sans', sans-serif" text-anchor="end" font-weight="normal"  textLength="13.18" lengthAdjust="spacing" stroke="#d0d0d0" stroke-width="0.15">Ids</text>
<text x="455.20" y="415.10" fill="#d6ca4c" font-size="9.1" font-family="'DejaVu Sans Mono', 'Liberation Mono', monospace" text-anchor="start" font-weight="normal"  stroke="#d6ca4c" stroke-width="0.3">−1</text>
<text x="449.80" y="428.10" fill="#d0d0d0" font-size="8.35" font-family="'DejaVu Sans', 'Liberation Sans', sans-serif" text-anchor="end" font-weight="normal"  textLength="51.66" lengthAdjust="spacing" stroke="#d0d0d0" stroke-width="0.15">Group index</text>
<text x="455.20" y="428.30" fill="#d6ca4c" font-size="9.1" font-family="'DejaVu Sans Mono', 'Liberation Mono', monospace" text-anchor="start" font-weight="normal"  stroke="#d6ca4c" stroke-width="0.3">0</text>
<rect x="490.70" y="424.00" width="185.50" height="1.20" fill="#4b4b4b" />
<rect x="491.40" y="420.50" width="5.70" height="8.30" fill="#747474" />
<rect x="677.20" y="282.60" width="8.70" height="135.00" fill="#4a4a4a" />
<rect x="677.20" y="283.00" width="8.70" height="103.40" fill="#5c5c5c" />
<rect x="677.20" y="417.60" width="8.70" height="15.00" fill="#c6c6c6" />
<path d="M679.3 424.2 L683.8 424.2 L681.55 419.9 Z" fill="#8e8e8e"/>
<path d="M679.3 426.6 L683.8 426.6 L681.55 430.9 Z" fill="#101010"/>
<rect x="345.00" y="452.50" width="338.10" height="0.90" fill="#a4a4a4" />
<rect x="345.00" y="451.90" width="35.90" height="2.10" fill="#f2f2f2" />
<text x="349.80" y="449.60" fill="#dcdcdc" font-size="8.35" font-family="'DejaVu Sans', 'Liberation Sans', sans-serif" text-anchor="start" font-weight="normal"  textLength="27.02" lengthAdjust="spacing" stroke="#dcdcdc" stroke-width="0.15">Picked</text>
<text x="348.40" y="464.80" fill="#bdbdbd" font-size="8.35" font-family="'DejaVu Sans', 'Liberation Sans', sans-serif" text-anchor="start" font-weight="normal"  textLength="34.68" lengthAdjust="spacing" stroke="#bdbdbd" stroke-width="0.15">Settings</text>
<text x="449.80" y="477.20" fill="#d0d0d0" font-size="8.35" font-family="'DejaVu Sans', 'Liberation Sans', sans-serif" text-anchor="end" font-weight="normal"  textLength="25.81" lengthAdjust="spacing" stroke="#d0d0d0" stroke-width="0.15">Group</text>
<text x="455.20" y="477.40" fill="#d6ca4c" font-size="9.1" font-family="'DejaVu Sans Mono', 'Liberation Mono', monospace" text-anchor="start" font-weight="normal"  stroke="#d6ca4c" stroke-width="0.3">silence</text>
<text x="449.80" y="490.40" fill="#d0d0d0" font-size="8.35" font-family="'DejaVu Sans', 'Liberation Sans', sans-serif" text-anchor="end" font-weight="normal"  textLength="51.75" lengthAdjust="spacing" stroke="#d0d0d0" stroke-width="0.15">Instruments</text>
<text x="455.20" y="490.60" fill="#d6ca4c" font-size="9.1" font-family="'DejaVu Sans Mono', 'Liberation Mono', monospace" text-anchor="start" font-weight="normal"  stroke="#d6ca4c" stroke-width="0.3">Silence</text>
<text x="449.80" y="503.60" fill="#d0d0d0" font-size="8.35" font-family="'DejaVu Sans', 'Liberation Sans', sans-serif" text-anchor="end" font-weight="normal"  textLength="51.54" lengthAdjust="spacing" stroke="#d0d0d0" stroke-width="0.15">Duration (s)</text>
<text x="455.20" y="503.80" fill="#d6ca4c" font-size="9.1" font-family="'DejaVu Sans Mono', 'Liberation Mono', monospace" text-anchor="start" font-weight="normal"  stroke="#d6ca4c" stroke-width="0.3">9.3750</text>
<rect x="490.70" y="499.50" width="192.70" height="1.20" fill="#4b4b4b" />
<rect x="677.80" y="496.00" width="5.70" height="8.30" fill="#747474" />
<text x="449.80" y="516.80" fill="#d0d0d0" font-size="8.35" font-family="'DejaVu Sans', 'Liberation Sans', sans-serif" text-anchor="end" font-weight="normal"  textLength="41.17" lengthAdjust="spacing" stroke="#d0d0d0" stroke-width="0.15">Algorithm</text>
<text x="455.20" y="517.00" fill="#d6ca4c" font-size="9.1" font-family="'DejaVu Sans Mono', 'Liberation Mono', monospace" text-anchor="start" font-weight="normal"  stroke="#d6ca4c" stroke-width="0.3">Silence</text>
<text x="449.80" y="530.00" fill="#d0d0d0" font-size="8.35" font-family="'DejaVu Sans', 'Liberation Sans', sans-serif" text-anchor="end" font-weight="normal"  textLength="37.88" lengthAdjust="spacing" stroke="#d0d0d0" stroke-width="0.15">Segment</text>
<text x="455.20" y="530.20" fill="#d6ca4c" font-size="9.1" font-family="'DejaVu Sans Mono', 'Liberation Mono', monospace" text-anchor="start" font-weight="normal"  stroke="#d6ca4c" stroke-width="0.3">65</text>
<rect x="490.70" y="525.90" width="192.70" height="1.20" fill="#4b4b4b" />
<rect x="677.80" y="522.40" width="5.70" height="8.30" fill="#747474" />
<text x="449.80" y="543.70" fill="#d0d0d0" font-size="8.35" font-family="'DejaVu Sans', 'Liberation Sans', sans-serif" text-anchor="end" font-weight="normal"  textLength="22.60" lengthAdjust="spacing" stroke="#d0d0d0" stroke-width="0.15">Jump</text>
<rect x="453.40" y="534.60" width="34.60" height="11.20" fill="#585858" />
<text x="470.70" y="543.70" fill="#e2e2e2" font-size="8.35" font-family="'DejaVu Sans', 'Liberation Sans', sans-serif" text-anchor="middle" font-weight="normal"  textLength="22.12" lengthAdjust="spacing" stroke="#e2e2e2" stroke-width="0.15">Pulse</text>
<text x="346.30" y="543.20" fill="#6a6a6a" font-size="8" font-family="'DejaVu Sans', 'Liberation Sans', sans-serif" text-anchor="start" font-weight="normal"  stroke="#6a6a6a" stroke-width="0.15">+</text>
<rect x="690.40" y="301.30" width="338.20" height="1.40" fill="#8e8e8e" />
<rect x="690.40" y="300.90" width="50.30" height="2.20" fill="#f2f2f2" />
<text x="694.90" y="298.70" fill="#dcdcdc" font-size="8.35" font-family="'DejaVu Sans', 'Liberation Sans', sans-serif" text-anchor="start" font-weight="normal"  textLength="41.17" lengthAdjust="spacing" stroke="#dcdcdc" stroke-width="0.15">Algorithm</text>
<text x="795.20" y="315.40" fill="#d0d0d0" font-size="8.35" font-family="'DejaVu Sans', 'Liberation Sans', sans-serif" text-anchor="end" font-weight="normal"  textLength="67.88" lengthAdjust="spacing" stroke="#d0d0d0" stroke-width="0.15">Overwrite mode</text>
<rect x="799.10" y="306.60" width="17.40" height="10.60" fill="#313131" />
<text x="800.90" y="315.40" fill="#ececec" font-size="8.35" font-family="'DejaVu Sans', 'Liberation Sans', sans-serif" text-anchor="start" font-weight="normal"  textLength="12.55" lengthAdjust="spacing" stroke="#ececec" stroke-width="0.15">Off</text>
<rect x="817.30" y="306.60" width="16.40" height="10.60" fill="#5b5b63" />
<path d="M798.80 314.30 L803.00 317.50 L798.80 317.50 Z" fill="#b89cf2"/>
<text x="795.20" y="328.60" fill="#d0d0d0" font-size="8.35" font-family="'DejaVu Sans', 'Liberation Sans', sans-serif" text-anchor="end" font-weight="normal"  textLength="22.47" lengthAdjust="spacing" stroke="#d0d0d0" stroke-width="0.15">Mode</text>
<rect x="799.10" y="319.80" width="229.70" height="10.60" fill="#5e5e5e" />
<text x="802.30" y="328.60" fill="#e2e2e2" font-size="8.35" font-family="'DejaVu Sans', 'Liberation Sans', sans-serif" text-anchor="start" font-weight="normal"  textLength="31.18" lengthAdjust="spacing" stroke="#e2e2e2" stroke-width="0.15">Spiking</text>
<path d="M1020.30 323.40 L1026.90 323.40 L1023.60 327.00 Z" fill="#f4f4f4"/>
<path d="M798.80 327.50 L803.00 330.70 L798.80 330.70 Z" fill="#b89cf2"/>
<text x="795.20" y="341.80" fill="#d0d0d0" font-size="8.35" font-family="'DejaVu Sans', 'Liberation Sans', sans-serif" text-anchor="end" font-weight="normal"  textLength="30.19" lengthAdjust="spacing" stroke="#d0d0d0" stroke-width="0.15">Trigger</text>
<rect x="799.10" y="332.70" width="34.60" height="11.20" fill="#585858" />
<text x="816.40" y="341.80" fill="#e2e2e2" font-size="8.35" font-family="'DejaVu Sans', 'Liberation Sans', sans-serif" text-anchor="middle" font-weight="normal"  textLength="22.12" lengthAdjust="spacing" stroke="#e2e2e2" stroke-width="0.15">Pulse</text>
<path d="M798.80 340.90 L803.00 344.10 L798.80 344.10 Z" fill="#b89cf2"/>
<rect x="690.40" y="347.80" width="338.20" height="1.00" fill="#383838" />
<text x="795.20" y="361.80" fill="#d0d0d0" font-size="8.35" font-family="'DejaVu Sans', 'Liberation Sans', sans-serif" text-anchor="end" font-weight="normal"  textLength="45.33" lengthAdjust="spacing" stroke="#d0d0d0" stroke-width="0.15">Completed</text>
<rect x="799.10" y="353.00" width="17.40" height="10.60" fill="#313131" />
<text x="800.90" y="361.80" fill="#d6ca4c" font-size="8.35" font-family="'DejaVu Sans', 'Liberation Sans', sans-serif" text-anchor="start" font-weight="normal"  textLength="12.55" lengthAdjust="spacing" stroke="#d6ca4c" stroke-width="0.15">Off</text>
<text x="795.20" y="375.00" fill="#d0d0d0" font-size="8.35" font-family="'DejaVu Sans', 'Liberation Sans', sans-serif" text-anchor="end" font-weight="normal"  textLength="55.21" lengthAdjust="spacing" stroke="#d0d0d0" stroke-width="0.15">Loop counter</text>
<text x="800.30" y="375.20" fill="#d6ca4c" font-size="9.1" font-family="'DejaVu Sans Mono', 'Liberation Mono', monospace" text-anchor="start" font-weight="normal"  stroke="#d6ca4c" stroke-width="0.3">0</text>
<rect x="834.50" y="370.90" width="194.10" height="1.20" fill="#4b4b4b" />
<rect x="837.00" y="367.40" width="5.70" height="8.30" fill="#747474" />
<rect x="690.40" y="401.10" width="338.20" height="1.40" fill="#8e8e8e" />
<rect x="690.40" y="400.70" width="43.10" height="2.20" fill="#f2f2f2" />
<text x="694.90" y="398.50" fill="#dcdcdc" font-size="8.35" font-family="'DejaVu Sans', 'Liberation Sans', sans-serif" text-anchor="start" font-weight="normal"  textLength="34.68" lengthAdjust="spacing" stroke="#dcdcdc" stroke-width="0.15">Settings</text>
<text x="795.20" y="415.10" fill="#d0d0d0" font-size="8.35" font-family="'DejaVu Sans', 'Liberation Sans', sans-serif" text-anchor="end" font-weight="normal"  textLength="24.08" lengthAdjust="spacing" stroke="#d0d0d0" stroke-width="0.15">Order</text>
<rect x="799.10" y="406.30" width="229.70" height="10.60" fill="#5e5e5e" />
<text x="802.30" y="415.10" fill="#e2e2e2" font-size="8.35" font-family="'DejaVu Sans', 'Liberation Sans', sans-serif" text-anchor="start" font-weight="normal"  textLength="34.79" lengthAdjust="spacing" stroke="#e2e2e2" stroke-width="0.15">Random</text>
<path d="M1020.30 409.90 L1026.90 409.90 L1023.60 413.50 Z" fill="#f4f4f4"/>
<rect x="690.40" y="421.00" width="338.20" height="1.00" fill="#383838" />
<text x="795.20" y="434.90" fill="#d0d0d0" font-size="8.35" font-family="'DejaVu Sans', 'Liberation Sans', sans-serif" text-anchor="end" font-weight="normal"  textLength="29.22" lengthAdjust="spacing" stroke="#d0d0d0" stroke-width="0.15">Extend</text>
<rect x="799.10" y="426.10" width="229.70" height="10.60" fill="#5e5e5e" />
<text x="802.30" y="434.90" fill="#e2e2e2" font-size="8.35" font-family="'DejaVu Sans', 'Liberation Sans', sans-serif" text-anchor="start" font-weight="normal"  textLength="19.49" lengthAdjust="spacing" stroke="#e2e2e2" stroke-width="0.15">Zero</text>
<path d="M1020.30 429.70 L1026.90 429.70 L1023.60 433.30 Z" fill="#f4f4f4"/>
<text x="795.20" y="448.10" fill="#d0d0d0" font-size="8.35" font-family="'DejaVu Sans', 'Liberation Sans', sans-serif" text-anchor="end" font-weight="normal"  textLength="39.20" lengthAdjust="spacing" stroke="#d0d0d0" stroke-width="0.15">Retrigger</text>
<rect x="798.70" y="439.10" width="17.30" height="11.00" fill="#8a8a8a" />
<rect x="816.00" y="439.10" width="17.90" height="11.00" fill="#e8e8e8" />
<text x="825.00" y="448.10" fill="#303030" font-size="8.35" font-family="'DejaVu Sans', 'Liberation Sans', sans-serif" text-anchor="middle" font-weight="normal"  textLength="11.96" lengthAdjust="spacing" stroke="#303030" stroke-width="0.15">On</text>
<text x="795.20" y="461.40" fill="#d0d0d0" font-size="8.35" font-family="'DejaVu Sans', 'Liberation Sans', sans-serif" text-anchor="end" font-weight="normal"  textLength="66.41" lengthAdjust="spacing" stroke="#d0d0d0" stroke-width="0.15">Retrigger range</text>
<rect x="799.10" y="452.30" width="113.70" height="11.20" fill="#585858" />
<text x="800.70" y="461.60" fill="#e0e0e0" font-size="9.1" font-family="'DejaVu Sans Mono', 'Liberation Mono', monospace" text-anchor="start" font-weight="normal"  stroke="#e0e0e0" stroke-width="0.3">1</text>
<rect x="914.60" y="452.30" width="114.20" height="11.20" fill="#585858" />
<text x="916.20" y="461.60" fill="#e0e0e0" font-size="9.1" font-family="'DejaVu Sans Mono', 'Liberation Mono', monospace" text-anchor="start" font-weight="normal"  stroke="#e0e0e0" stroke-width="0.3">2</text>
<rect x="690.40" y="467.10" width="338.20" height="1.00" fill="#383838" />
<text x="795.20" y="481.20" fill="#d0d0d0" font-size="8.35" font-family="'DejaVu Sans', 'Liberation Sans', sans-serif" text-anchor="end" font-weight="normal"  textLength="65.52" lengthAdjust="spacing" stroke="#d0d0d0" stroke-width="0.15">Spike range (s)</text>
<rect x="799.10" y="472.10" width="113.70" height="11.20" fill="#585858" />
<text x="800.70" y="481.40" fill="#e0e0e0" font-size="9.1" font-family="'DejaVu Sans Mono', 'Liberation Mono', monospace" text-anchor="start" font-weight="normal"  stroke="#e0e0e0" stroke-width="0.3">0.016</text>
<rect x="914.60" y="472.10" width="114.20" height="11.20" fill="#585858" />
<text x="916.20" y="481.40" fill="#e0e0e0" font-size="9.1" font-family="'DejaVu Sans Mono', 'Liberation Mono', monospace" text-anchor="start" font-weight="normal"  stroke="#e0e0e0" stroke-width="0.3">0.03</text>
<text x="795.20" y="494.40" fill="#d0d0d0" font-size="8.35" font-family="'DejaVu Sans', 'Liberation Sans', sans-serif" text-anchor="end" font-weight="normal"  textLength="67.51" lengthAdjust="spacing" stroke="#d0d0d0" stroke-width="0.15">Amp range (db)</text>
<rect x="799.10" y="485.30" width="113.70" height="11.20" fill="#585858" />
<text x="800.70" y="494.60" fill="#e0e0e0" font-size="9.1" font-family="'DejaVu Sans Mono', 'Liberation Mono', monospace" text-anchor="start" font-weight="normal"  stroke="#e0e0e0" stroke-width="0.3">−30</text>
<rect x="914.60" y="485.30" width="114.20" height="11.20" fill="#585858" />
<text x="916.20" y="494.60" fill="#e0e0e0" font-size="9.1" font-family="'DejaVu Sans Mono', 'Liberation Mono', monospace" text-anchor="start" font-weight="normal"  stroke="#e0e0e0" stroke-width="0.3">0</text>
<rect x="690.40" y="500.30" width="338.20" height="1.00" fill="#383838" />
<text x="795.20" y="514.40" fill="#d0d0d0" font-size="8.35" font-family="'DejaVu Sans', 'Liberation Sans', sans-serif" text-anchor="end" font-weight="normal"  textLength="72.20" lengthAdjust="spacing" stroke="#d0d0d0" stroke-width="0.15">Fragments range</text>
<rect x="799.10" y="505.30" width="113.70" height="11.20" fill="#585858" />
<text x="800.70" y="514.60" fill="#e0e0e0" font-size="9.1" font-family="'DejaVu Sans Mono', 'Liberation Mono', monospace" text-anchor="start" font-weight="normal"  stroke="#e0e0e0" stroke-width="0.3">5</text>
<rect x="914.60" y="505.30" width="114.20" height="11.20" fill="#585858" />
<text x="916.20" y="514.60" fill="#e0e0e0" font-size="9.1" font-family="'DejaVu Sans Mono', 'Liberation Mono', monospace" text-anchor="start" font-weight="normal"  stroke="#e0e0e0" stroke-width="0.3">10</text>
<rect x="1036.40" y="301.30" width="338.60" height="1.40" fill="#8e8e8e" />
<rect x="1036.40" y="300.90" width="70.30" height="2.20" fill="#f2f2f2" />
<text x="1040.90" y="298.70" fill="#dcdcdc" font-size="8.35" font-family="'DejaVu Sans', 'Liberation Sans', sans-serif" text-anchor="start" font-weight="normal"  textLength="60.83" lengthAdjust="spacing" stroke="#dcdcdc" stroke-width="0.15">NodeJS server</text>
<text x="1141.00" y="315.40" fill="#d0d0d0" font-size="8.35" font-family="'DejaVu Sans', 'Liberation Sans', sans-serif" text-anchor="end" font-weight="normal"  textLength="25.77" lengthAdjust="spacing" stroke="#d0d0d0" stroke-width="0.15">Active</text>
<rect x="1144.30" y="306.60" width="17.40" height="10.60" fill="#313131" />
<text x="1146.10" y="315.40" fill="#ececec" font-size="8.35" font-family="'DejaVu Sans', 'Liberation Sans', sans-serif" text-anchor="start" font-weight="normal"  textLength="12.55" lengthAdjust="spacing" stroke="#ececec" stroke-width="0.15">Off</text>
<rect x="1162.50" y="306.60" width="16.40" height="10.60" fill="#5b5b63" />
<text x="1141.00" y="328.60" fill="#d0d0d0" font-size="8.35" font-family="'DejaVu Sans', 'Liberation Sans', sans-serif" text-anchor="end" font-weight="normal"  textLength="23.59" lengthAdjust="spacing" stroke="#d0d0d0" stroke-width="0.15">Reset</text>
<rect x="1144.30" y="319.50" width="35.20" height="11.20" fill="#585858" />
<text x="1161.90" y="328.60" fill="#e2e2e2" font-size="8.35" font-family="'DejaVu Sans', 'Liberation Sans', sans-serif" text-anchor="middle" font-weight="normal"  textLength="22.12" lengthAdjust="spacing" stroke="#e2e2e2" stroke-width="0.15">Pulse</text>
<text x="1141.00" y="341.90" fill="#d0d0d0" font-size="8.35" font-family="'DejaVu Sans', 'Liberation Sans', sans-serif" text-anchor="end" font-weight="normal"  textLength="71.12" lengthAdjust="spacing" stroke="#d0d0d0" stroke-width="0.15">Network address</text>
<rect x="1144.30" y="332.40" width="230.90" height="12.00" fill="#b4b4b4" />
<text x="1146.90" y="342.10" fill="#1c1c1c" font-size="9.1" font-family="'DejaVu Sans Mono', 'Liberation Mono', monospace" text-anchor="start" font-weight="normal"  stroke="#1c1c1c" stroke-width="0.3">ws://localhost/</text>
<text x="1141.00" y="355.50" fill="#d0d0d0" font-size="8.35" font-family="'DejaVu Sans', 'Liberation Sans', sans-serif" text-anchor="end" font-weight="normal"  textLength="17.10" lengthAdjust="spacing" stroke="#d0d0d0" stroke-width="0.15">Port</text>
<rect x="1144.30" y="346.40" width="35.60" height="11.20" fill="#585858" />
<text x="1145.90" y="355.70" fill="#e0e0e0" font-size="9.1" font-family="'DejaVu Sans Mono', 'Liberation Mono', monospace" text-anchor="start" font-weight="normal"  stroke="#e0e0e0" stroke-width="0.3">8080</text>
<rect x="1181.00" y="351.40" width="194.20" height="1.20" fill="#2f2f2f" />
<rect x="1369.40" y="347.90" width="5.70" height="8.30" fill="#747474" />
<rect x="1036.40" y="401.30" width="338.60" height="1.40" fill="#8e8e8e" />
<rect x="1036.40" y="400.90" width="27.20" height="2.20" fill="#f2f2f2" />
<text x="1040.90" y="398.70" fill="#dcdcdc" font-size="8.35" font-family="'DejaVu Sans', 'Liberation Sans', sans-serif" text-anchor="start" font-weight="normal"  textLength="18.26" lengthAdjust="spacing" stroke="#dcdcdc" stroke-width="0.15">OSC</text>
<text x="1067.90" y="398.70" fill="#dcdcdc" font-size="8.35" font-family="'DejaVu Sans', 'Liberation Sans', sans-serif" text-anchor="start" font-weight="normal"  textLength="20.68" lengthAdjust="spacing" stroke="#dcdcdc" stroke-width="0.15">MIDI</text>
<text x="1039.50" y="413.40" fill="#bdbdbd" font-size="8.35" font-family="'DejaVu Sans', 'Liberation Sans', sans-serif" text-anchor="start" font-weight="normal"  textLength="29.54" lengthAdjust="spacing" stroke="#bdbdbd" stroke-width="0.15">Visuals</text>
<text x="1141.00" y="425.90" fill="#d0d0d0" font-size="8.35" font-family="'DejaVu Sans', 'Liberation Sans', sans-serif" text-anchor="end" font-weight="normal"  textLength="71.81" lengthAdjust="spacing" stroke="#d0d0d0" stroke-width="0.15">Network Address</text>
<rect x="1144.30" y="416.40" width="230.90" height="12.00" fill="#b4b4b4" />
<text x="1146.90" y="426.10" fill="#1c1c1c" font-size="9.1" font-family="'DejaVu Sans Mono', 'Liberation Mono', monospace" text-anchor="start" font-weight="normal"  stroke="#1c1c1c" stroke-width="0.3">localhost</text>
<path d="M1144.00 425.40 L1148.20 428.60 L1144.00 428.60 Z" fill="#b89cf2"/>
<text x="1141.00" y="439.40" fill="#d0d0d0" font-size="8.35" font-family="'DejaVu Sans', 'Liberation Sans', sans-serif" text-anchor="end" font-weight="normal"  textLength="17.10" lengthAdjust="spacing" stroke="#d0d0d0" stroke-width="0.15">Port</text>
<rect x="1144.30" y="430.30" width="35.60" height="11.20" fill="#585858" />
<text x="1145.90" y="439.60" fill="#e0e0e0" font-size="9.1" font-family="'DejaVu Sans Mono', 'Liberation Mono', monospace" text-anchor="start" font-weight="normal"  stroke="#e0e0e0" stroke-width="0.3">12000</text>
<rect x="1181.00" y="435.30" width="194.20" height="1.20" fill="#2f2f2f" />
<rect x="1216.90" y="431.80" width="5.70" height="8.30" fill="#747474" />
<path d="M1144.00 438.50 L1148.20 441.70 L1144.00 441.70 Z" fill="#b89cf2"/>
<text x="1039.50" y="451.00" fill="#bdbdbd" font-size="8.35" font-family="'DejaVu Sans', 'Liberation Sans', sans-serif" text-anchor="start" font-weight="normal"  textLength="23.75" lengthAdjust="spacing" stroke="#bdbdbd" stroke-width="0.15">Audio</text>
<text x="1141.00" y="463.20" fill="#d0d0d0" font-size="8.35" font-family="'DejaVu Sans', 'Liberation Sans', sans-serif" text-anchor="end" font-weight="normal"  textLength="71.81" lengthAdjust="spacing" stroke="#d0d0d0" stroke-width="0.15">Network Address</text>
<rect x="1144.30" y="453.70" width="230.90" height="12.00" fill="#b4b4b4" />
<text x="1146.90" y="463.40" fill="#1c1c1c" font-size="9.1" font-family="'DejaVu Sans Mono', 'Liberation Mono', monospace" text-anchor="start" font-weight="normal"  stroke="#1c1c1c" stroke-width="0.3">localhost</text>
<path d="M1144.00 462.70 L1148.20 465.90 L1144.00 465.90 Z" fill="#b89cf2"/>
<text x="1141.00" y="476.80" fill="#d0d0d0" font-size="8.35" font-family="'DejaVu Sans', 'Liberation Sans', sans-serif" text-anchor="end" font-weight="normal"  textLength="43.12" lengthAdjust="spacing" stroke="#d0d0d0" stroke-width="0.15">Port audio</text>
<rect x="1144.30" y="467.70" width="35.60" height="11.20" fill="#585858" />
<text x="1145.90" y="477.00" fill="#e0e0e0" font-size="9.1" font-family="'DejaVu Sans Mono', 'Liberation Mono', monospace" text-anchor="start" font-weight="normal"  stroke="#e0e0e0" stroke-width="0.3">9999</text>
<rect x="1181.00" y="472.70" width="194.20" height="1.20" fill="#2f2f2f" />
<rect x="1369.40" y="469.20" width="5.70" height="8.30" fill="#747474" />
<path d="M1144.00 475.90 L1148.20 479.10 L1144.00 479.10 Z" fill="#b89cf2"/>
<text x="1039.50" y="488.00" fill="#bdbdbd" font-size="8.35" font-family="'DejaVu Sans', 'Liberation Sans', sans-serif" text-anchor="start" font-weight="normal"  textLength="36.18" lengthAdjust="spacing" stroke="#bdbdbd" stroke-width="0.15">Receiver</text>
<text x="1141.00" y="500.80" fill="#d0d0d0" font-size="8.35" font-family="'DejaVu Sans', 'Liberation Sans', sans-serif" text-anchor="end" font-weight="normal"  textLength="58.16" lengthAdjust="spacing" stroke="#d0d0d0" stroke-width="0.15">Local Address</text>
<rect x="1144.30" y="491.30" width="215.30" height="12.00" fill="#b4b4b4" />
<text x="1146.90" y="501.00" fill="#1c1c1c" font-size="9.1" font-family="'DejaVu Sans Mono', 'Liberation Mono', monospace" text-anchor="start" font-weight="normal"  stroke="#1c1c1c" stroke-width="0.3">192.168.2.17</text>
<path d="M1144.00 500.30 L1148.20 503.50 L1144.00 503.50 Z" fill="#b89cf2"/>
<rect x="1361.20" y="491.30" width="14.00" height="12.00" fill="#5a5a5a" />
<path d="M1364.3 493.70 L1372.6 497.30 L1364.3 500.90 Z" fill="#0a0a0a"/>
<text x="1141.00" y="514.20" fill="#d0d0d0" font-size="8.35" font-family="'DejaVu Sans', 'Liberation Sans', sans-serif" text-anchor="end" font-weight="normal"  textLength="17.10" lengthAdjust="spacing" stroke="#d0d0d0" stroke-width="0.15">Port</text>
<rect x="1144.30" y="505.10" width="35.60" height="11.20" fill="#585858" />
<text x="1145.90" y="514.40" fill="#e0e0e0" font-size="9.1" font-family="'DejaVu Sans Mono', 'Liberation Mono', monospace" text-anchor="start" font-weight="normal"  stroke="#e0e0e0" stroke-width="0.3">10000</text>
<rect x="1181.00" y="510.10" width="194.20" height="1.20" fill="#2f2f2f" />
<rect x="1211.30" y="506.60" width="5.70" height="8.30" fill="#747474" />
<path d="M1144.00 513.30 L1148.20 516.50 L1144.00 516.50 Z" fill="#b89cf2"/>
</svg>
</body>
</html>
